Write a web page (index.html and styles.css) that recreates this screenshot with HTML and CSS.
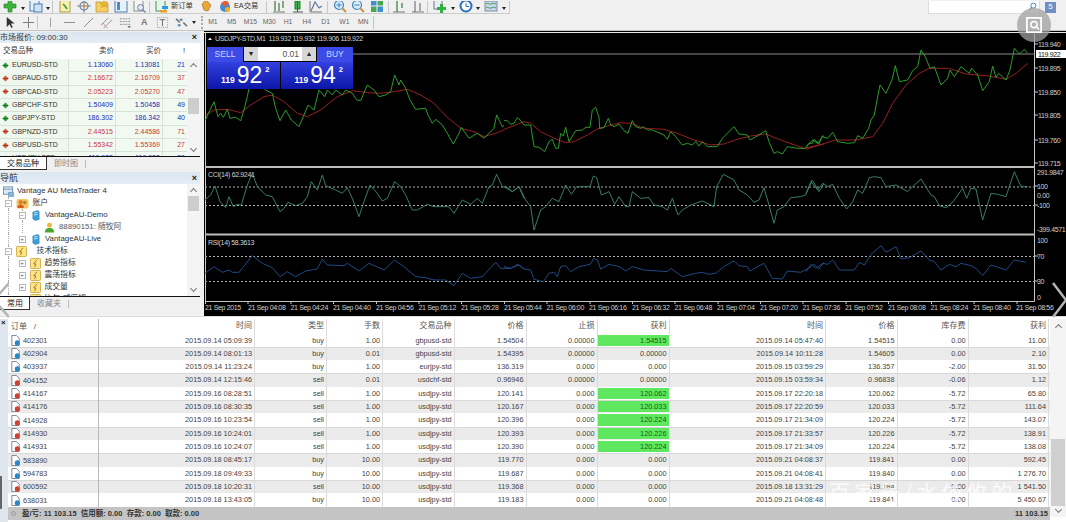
FILE: index.html
```html
<!DOCTYPE html>
<html lang="zh">
<head>
<meta charset="utf-8">
<title>MetaTrader 4</title>
<link rel="stylesheet" href="styles.css">
</head>
<body>
<svg class="defs" width="0" height="0" aria-hidden="true">
  <symbol id="doc-buy" viewBox="0 0 12 12"><path d="M2 .5h5l3 3v8H2z" fill="#fff" stroke="#50607a" stroke-width=".8"/><circle cx="8" cy="8.6" r="2.8" fill="#2a88c8"/></symbol>
  <symbol id="doc-sell" viewBox="0 0 12 12"><path d="M2 .5h5l3 3v8H2z" fill="#fff" stroke="#50607a" stroke-width=".8"/><circle cx="8" cy="8.6" r="2.8" fill="#d04030"/></symbol>
  <symbol id="arrow-g" viewBox="0 0 8 8"><path d="M4 .5 7.500 4 4 7.500.5 4z" fill="#2e9a3a"/><path d="M1 4h6" stroke="#1c6a28" stroke-width="1"/></symbol>
  <symbol id="arrow-r" viewBox="0 0 8 8"><path d="M4 .5 7.500 4 4 7.500.5 4z" fill="#d8583a"/><path d="M1 4h6" stroke="#a83420" stroke-width="1"/></symbol>
  <symbol id="flag" viewBox="0 0 12 12"><rect x=".5" y=".5" width="11" height="11" rx="1" fill="#fbe58a" stroke="#d0a840"/><path d="M7.500 2 4 6.500h2.500L5 10" fill="none" stroke="#b06a10"/></symbol>
  <symbol id="server" viewBox="0 0 10 14"><path d="M1 2.500 7 .5l2 1.500v10l-5 1.500-3-2z" fill="#3aa0dc" stroke="#1f6fa8" stroke-width=".6"/><path d="M2.500 4 7 3M2.500 6.500 7 5.500" stroke="#d8f0ff"/></symbol>
  <symbol id="user" viewBox="0 0 12 12"><circle cx="6" cy="3.500" r="2.700" fill="#e8b838"/><path d="M1 11.500c0-4 2-5 5-5s5 1 5 5z" fill="#48a830"/></symbol>
  <symbol id="users" viewBox="0 0 14 12"><rect x=".5" y="1" width="13" height="10.500" rx="2" fill="#f0c860"/><circle cx="5" cy="4.500" r="2.200" fill="#e07a28"/><path d="M1.500 11c0-3 1.500-4 3.500-4s3.500 1 3.500 4z" fill="#d85a20"/><circle cx="9.500" cy="5" r="2" fill="#b8862a"/></symbol>
  <symbol id="mt" viewBox="0 0 12 12"><rect x=".5" y="1" width="10" height="8" fill="#dceaf6" stroke="#6a90b8"/><path d="M1 3.500h9" stroke="#6a90b8"/><path d="M6 7h5.500v4.500H6z" fill="#8ab8dc" stroke="#4a80b0" stroke-width=".6"/></symbol>
</svg>

<div class="app">
  <div class="tb tb-one">
    <div class="tb-group">
      <span class="ic"><svg viewBox="0 0 14 14"><path d="M5 1h4v4h4v4H9v4H5V9H1V5h4z" fill="#3cb43c" stroke="#237a23" stroke-width=".6"/></svg></span><span class="dd"></span>
      <span class="ic"><svg viewBox="0 0 14 14"><rect x="1" y="1" width="9" height="11" fill="#e6f0fa" stroke="#4a7cb0"/><rect x="5" y="5" width="8" height="8" fill="#cfe2f5" stroke="#4a7cb0"/></svg></span><span class="dd"></span>
      <span class="sp"></span>
      <span class="ic"><svg viewBox="0 0 14 14"><rect x="2" y="1" width="10" height="12" fill="#f7efb0" stroke="#b09a40"/><path d="m5 5 2 2 2 3" stroke="#2d9a38" stroke-width="1.600" fill="none"/></svg></span>
      <span class="ic"><svg viewBox="0 0 14 14"><circle cx="7" cy="7" r="4" fill="none" stroke="#7a8aa0" stroke-width="1.400"/><path d="M7 0v14M0 7h14" stroke="#7a8aa0"/><circle cx="7" cy="7" r="1.500" fill="#d89030"/></svg></span>
      <span class="ic"><svg viewBox="0 0 14 14"><path d="M1 3h5l1 2h6v8H1z" fill="#f5d060" stroke="#b88f28" stroke-width=".7"/><path d="m9 .5 1.300 2.500 2.700.4-2 1.900.5 2.700L9 7 6.500 8.500 7 5.800 5 3.900l2.700-.4z" fill="#f0b820" stroke="#b88f28" stroke-width=".5"/></svg></span>
      <span class="ic"><svg viewBox="0 0 14 14"><rect x="1" y="1" width="12" height="12" fill="#e8f0f8" stroke="#4a7cb0"/><rect x="3" y="3" width="3" height="8" fill="#4a8cc8"/></svg></span>
      <span class="ic"><svg viewBox="0 0 14 14"><rect x="2" y="1" width="9" height="11" fill="#f6f6f6" stroke="#8a8a8a"/><circle cx="8.500" cy="8.500" r="3" fill="#dfeaf5" stroke="#6a7f98"/><path d="m11 11 2.500 2.500" stroke="#6a7f98" stroke-width="1.300"/></svg></span>
      <span class="sp"></span>
      <span class="ic"><svg viewBox="0 0 14 14"><rect x="1" y="1" width="9" height="11" fill="#e6f5ea" stroke="#3a9a4a"/><path d="M7 7h6v3H7z" fill="#2f9adf"/><path d="M5 11h7v2.500H5z" fill="#e8a030"/></svg></span>
      <span class="ic-label">新订单</span>
      <span class="ic wide"><svg viewBox="0 0 14 14"><path d="M3 5 7 1l5 5-3 6-4-1z" fill="#e8a838" stroke="#a87018" stroke-width=".7"/></svg></span>
      <span class="ic"><svg viewBox="0 0 14 14"><circle cx="7" cy="8" r="5" fill="#3f8fd0"/><path d="M3 4 8 1l3 3-4 4z" fill="#e85a30"/><circle cx="9.500" cy="10.500" r="2.500" fill="#f0b020"/></svg></span>
      <span class="ic-label ea">EA交易</span>
      <span class="sp after-ea"></span>
      <span class="ic"><svg viewBox="0 0 14 14"><path d="M3 2v10M7 4v8M11 2v7" stroke="#5a8a5a" stroke-width="1.400"/><path d="M1 13h12" stroke="#7a7a7a"/></svg></span>
      <span class="ic"><svg viewBox="0 0 14 14"><rect x="4" y="2" width="5" height="8" fill="#3fb04a" stroke="#1f7a2a"/><path d="M6.500 0v13M2 13h10" stroke="#555"/></svg></span>
      <span class="ic"><svg viewBox="0 0 14 14"><path d="M2 12 6 3l4 6 3-2" fill="none" stroke="#5a7a9a" stroke-width="1.200"/><path d="M1 1v12h12" fill="none" stroke="#777"/></svg></span>
      <span class="sp after-bars"></span>
      <span class="ic"><svg viewBox="0 0 14 14"><circle cx="6" cy="6" r="4.500" fill="#d8ecfa" stroke="#3f80b8" stroke-width="1.200"/><path d="m9.500 9.500 3.500 3.500" stroke="#c89030" stroke-width="1.800"/><path d="M3.500 6h5M6 3.500v5" stroke="#3f80b8"/></svg></span>
      <span class="ic"><svg viewBox="0 0 14 14"><circle cx="6" cy="6" r="4.500" fill="#d8ecfa" stroke="#3f80b8" stroke-width="1.200"/><path d="m9.500 9.500 3.500 3.500" stroke="#c89030" stroke-width="1.800"/><path d="M3.500 6h5" stroke="#3f80b8"/></svg></span>
      <span class="ic"><svg viewBox="0 0 14 14"><rect x="1" y="1" width="5.500" height="5.500" fill="#3f90d0"/><rect x="7.500" y="1" width="5.500" height="5.500" fill="#48a850"/><rect x="1" y="7.500" width="5.500" height="5.500" fill="#48a850"/><rect x="7.500" y="7.500" width="5.500" height="5.500" fill="#3f90d0"/></svg></span>
      <span class="sp after-grid"></span>
      <span class="ic"><svg viewBox="0 0 14 14"><path d="M5 1v12M10 4v5" stroke="#4a8a5a" stroke-width="1.400"/><path d="M1 13h12" stroke="#777"/></svg></span>
      <span class="ic"><svg viewBox="0 0 14 14"><path d="M4 1v12M9 4v8" stroke="#8a8a8a" stroke-width="1.400"/><path d="M1 13h12" stroke="#777"/></svg></span>
      <span class="sp"></span>
      <span class="ic"><svg viewBox="0 0 14 14"><rect x="1" y="1" width="8" height="9" fill="#e8eef4" stroke="#6a7a8a"/><path d="M7 5h3v3h3v3h-3v3H7v-3H4V8h3z" fill="#2fb040"/></svg></span><span class="dd"></span>
      <span class="ic"><svg viewBox="0 0 14 14"><circle cx="7" cy="7" r="5.500" fill="#fff" stroke="#2a70b8" stroke-width="2"/><path d="M7 4v3.500h3" stroke="#2a70b8" fill="none"/></svg></span><span class="dd"></span>
      <span class="ic"><svg viewBox="0 0 14 14"><rect x="1" y="2" width="12" height="10" fill="#c8d8e8" stroke="#7a8ca0"/><path d="M2 5c2-2 3 1 5 0s3-1 5 0M2 9c2-2 3 1 5 0s3-1 5 0" stroke="#3a9a4a" fill="none"/></svg></span><span class="dd"></span>
    </div>
    <div class="search"><svg viewBox="0 0 10 10"><circle cx="6" cy="4" r="2.800" fill="none" stroke="#3a78b8"/><path d="M4 6 1.500 9" stroke="#3a78b8" stroke-width="1.300"/></svg></div>
    <div class="book">5</div>
  </div>

  <div class="tb tb-two">
    <span class="tool on"><svg viewBox="0 0 14 14"><path d="M4 1v11l3-3 2 4 1.500-.8-2-4h4z" fill="#333"/></svg></span>
    <span class="tool"><svg viewBox="0 0 14 14"><path d="M7 1v12M1 7h12" stroke="#777"/></svg></span>
    <span class="sp"></span>
    <span class="tool"><svg viewBox="0 0 14 14"><path d="M7 2v10" stroke="#999"/></svg></span>
    <span class="tool"><svg viewBox="0 0 14 14"><path d="M1 7h12" stroke="#888"/></svg></span>
    <span class="tool"><svg viewBox="0 0 14 14"><path d="m2 12 10-10" stroke="#888"/></svg></span>
    <span class="tool"><svg viewBox="0 0 14 14"><path d="m1 10 8-8M4 13l9-9" stroke="#8a8a8a"/><path d="m3 8 5 5" stroke="#c88" stroke-width="1.500" stroke-dasharray="1 1"/></svg></span>
    <span class="tool"><svg viewBox="0 0 14 14"><path d="M1 3h12M1 6h12M1 9h12" stroke="#888" stroke-dasharray="2 1"/><path d="M9 11h4l-2 2z" fill="#555"/></svg></span>
    <span class="tool letter">A</span>
    <span class="tool"><svg viewBox="0 0 14 14"><rect x="1.500" y="1.500" width="11" height="11" fill="none" stroke="#999" stroke-dasharray="1 1"/><path d="M4 4h6M7 4v7" stroke="#666"/></svg></span>
    <span class="tool"><svg viewBox="0 0 14 14"><path d="m1 3 4 4M9 7l4 4" stroke="#666" stroke-width="1.500"/><path d="M5 3h3v2H5zM3 9h3v2H3z" fill="#5a7f9f"/></svg></span><span class="dd"></span>
    <span class="grip"></span>
    <span class="tf">M1</span><span class="tf">M5</span><span class="tf">M15</span><span class="tf">M30</span><span class="tf">H1</span><span class="tf">H4</span><span class="tf">D1</span><span class="tf">W1</span><span class="tf">MN</span>
    <span class="sp"></span>
  </div>

  <div class="main">
    <aside class="left">
      <section class="market">
        <div class="ph">市场报价: 09:00:30<b>×</b></div>
        <div class="mhead"><span>交易品种</span><span>卖价</span><span>买价</span><span>!</span></div>
        <div class="mbody">
          <div class="mlist">
            <div class="mrow up"><span><svg><use href="#arrow-g"/></svg>EURUSD-STD</span><span>1.13060</span><span>1.13081</span><span>21</span></div>
            <div class="mrow dn"><span><svg><use href="#arrow-r"/></svg>GBPAUD-STD</span><span>2.16672</span><span>2.16709</span><span>37</span></div>
            <div class="mrow dn"><span><svg><use href="#arrow-r"/></svg>GBPCAD-STD</span><span>2.05223</span><span>2.05270</span><span>47</span></div>
            <div class="mrow up"><span><svg><use href="#arrow-g"/></svg>GBPCHF-STD</span><span>1.50409</span><span>1.50458</span><span>49</span></div>
            <div class="mrow up"><span><svg><use href="#arrow-g"/></svg>GBPJPY-STD</span><span>186.302</span><span>186.342</span><span>40</span></div>
            <div class="mrow dn"><span><svg><use href="#arrow-r"/></svg>GBPNZD-STD</span><span>2.44515</span><span>2.44586</span><span>71</span></div>
            <div class="mrow dn"><span><svg><use href="#arrow-r"/></svg>GBPUSD-STD</span><span>1.55342</span><span>1.55369</span><span>27</span></div>
            <div class="mrow up"><span><svg><use href="#arrow-g"/></svg>USDJPY-STD</span><span>119.922</span><span>119.952</span><span>30</span></div>
          </div>
          <div class="sb mkt-sb"><i class="up-a"></i><i class="thumb"></i><i class="dn-a"></i></div>
        </div>
        <div class="tabs"><span class="tab on">交易品种</span><span class="tab">即时图</span><span class="tab-sep"></span></div>
      </section>

      <section class="nav">
        <div class="ph nav-ph">导航<b>×</b></div>
        <div class="nbody">
          <div class="tree">
            <div class="n l0"><svg class="i"><use href="#mt"/></svg>Vantage AU MetaTrader 4</div>
            <div class="n l1"><span class="tg">−</span><svg class="i iw"><use href="#users"/></svg>账户</div>
            <div class="n l2 sub"><span class="tg">−</span><svg class="i is"><use href="#server"/></svg>VantageAU-Demo</div>
            <div class="n l3 sub"><svg class="i"><use href="#user"/></svg>88890151: 随牧阿</div>
            <div class="n l2"><span class="tg">+</span><svg class="i is"><use href="#server"/></svg>VantageAU-Live</div>
            <div class="n l1"><span class="tg">−</span><svg class="i if"><use href="#flag"/></svg>技术指标</div>
            <div class="n l2"><span class="tg">+</span><svg class="i"><use href="#flag"/></svg>趋势指标</div>
            <div class="n l2"><span class="tg">+</span><svg class="i"><use href="#flag"/></svg>震荡指标</div>
            <div class="n l2"><span class="tg">+</span><svg class="i"><use href="#flag"/></svg>成交量</div>
            <div class="n l2"><span class="tg">+</span><svg class="i"><use href="#flag"/></svg>比尔·威廉姆</div>
          </div>
          <div class="sb nav-sb"><i class="up-a"></i><i class="thumb"></i><i class="dn-a"></i></div>
        </div>
        <div class="tabs"><span class="tab on short">常用</span><span class="tab">收藏夹</span><span class="tab-sep"></span></div>
      </section>
    </aside>

    <div class="chart">
      <svg class="plot" viewBox="204 31 862 285" width="862" height="285">
        <rect x="204" y="31" width="862" height="285" fill="#000"/>
        <path class="frame" d="M204 32.500H1066"/>
        <path class="frame-dim" d="M205.500 33V301.500H1034.500V33"/>
        <path class="pane" d="M205 167H1035M205 234.500H1035"/>
        <path class="bid" d="M353 54H1035"/>
        <path class="lvl" d="M205 187H1035M205 205.500H1035M205 256.500H1035M205 281.500H1035"/>
        <path class="frame-dim" d="M205.500 301v3M248 301v3M291 301v3M333.500 301v3M376.500 301v3M419 301v3M461.500 301v3M504.500 301v3M547 301v3M590 301v3M632.500 301v3M675 301v3M718 301v3M760.500 301v3M803 301v3M846 301v3M888.500 301v3M931.500 301v3M974 301v3M1017 301v3M1035 44h3M1035 68h3M1035 92h3M1035 115h3M1035 140h3M1035 163h3M1035 186h3M1035 205h3M1035 256h3M1035 281h3"/>

        <polyline class="red" transform="translate(204 30) scale(.3333)" points="5,255 30,240 70,238 110,248 140,225 180,200 205,195 240,215 280,250 310,260 350,240 400,200 445,182 490,188 530,190 570,185 610,178 650,195 690,220 730,262 770,295 810,305 840,320 880,308 900,300"/>
        <polyline class="red" transform="translate(504 30) scale(.3333)" points="0,298 30,287 60,275 80,280 110,305 150,325 185,338 210,335 250,315 280,297 320,285 350,278 380,280 420,295 480,298 520,310 570,330 620,345 660,342 700,328 740,318 785,312 830,330 900,355 960,342"/>
        <polyline class="red" transform="translate(806 0) scale(.3333)" points="0,448 40,435 90,420 150,420 200,410 230,370 260,310 300,255 340,220 370,205 430,205 480,222 550,228 600,238 630,220 665,190"/>
        <polyline class="green" transform="translate(204 30) scale(.3333)" points="5,268 18,240 30,215 42,260 50,250 58,262 70,238 78,265 95,262 110,272 120,240 130,200 140,150 160,130 184,180 205,190 215,235 228,272 245,240 262,270 285,290 300,255 312,225 330,240 345,180 362,200 370,180 385,195 395,180 415,195 425,180 445,190 458,210 470,212 490,165 510,180 525,200 545,195 560,185 572,135 585,165 590,150 605,175 618,210 635,238 665,235 672,255 685,280 695,268 715,285 730,310 748,342 765,310 772,292 795,325 820,310 840,325 870,295 878,255 895,290 900,285"/>
        <polyline class="green" transform="translate(504 30) scale(.3333)" points="0,272 10,272 20,283 30,280 40,263 50,272 60,285 80,285 90,350 105,352 122,365 135,335 145,328 155,355 163,355 170,310 178,318 185,292 195,335 215,302 235,300 245,292 258,292 265,240 275,232 285,262 287,295 300,293 313,265 320,285 330,290 345,282 360,302 372,310 385,272 395,290 410,295 420,290 430,300 445,300 480,315 490,328 500,305 515,320 535,345 550,340 565,345 575,335 585,348 595,335 610,350 625,350 640,350 655,325 690,290 705,312 730,315 738,330 760,318 785,302 795,335 810,370 820,365 835,372 850,350 880,355 905,355 915,340 925,340 930,328 945,342 955,318 960,318"/>
        <polyline class="green" transform="translate(806 0) scale(.3333)" points="0,440 20,420 35,430 50,410 65,415 80,397 95,425 125,430 145,428 155,407 170,415 188,385 195,360 205,345 215,290 222,255 240,280 258,240 268,197 280,245 305,240 320,212 335,200 345,150 358,170 372,205 385,200 405,255 425,235 432,210 445,230 465,200 490,220 497,205 515,225 530,272 550,245 560,198 570,232 578,220 600,240 612,210 625,145 640,162 655,148 665,160"/>

        <polyline class="cci" transform="translate(204 165) scale(.3333)" points="3,105 20,90 33,63 48,110 65,128 75,95 88,125 100,118 112,120 130,60 145,25 160,65 185,90 205,95 228,140 240,130 252,112 275,122 295,115 310,95 322,50 340,75 355,30 365,62 395,75 415,85 430,68 445,100 465,155 480,110 498,60 520,85 535,108 550,100 572,50 590,65 605,90 625,135 640,135 670,118 690,125 735,125 750,145 775,105 800,118 820,100 835,115 855,65 865,60 878,28 895,65 910,68 925,80 945,65 960,100"/>
        <polyline class="cci" transform="translate(504 165) scale(.3333)" points="0,65 25,80 45,65 65,105 80,125 90,195 110,135 125,125 145,100 165,110 185,60 202,88 218,65 258,65 268,33 278,38 292,90 315,80 332,118 345,95 365,125 375,125 385,80 410,100 435,98 450,120 475,125 490,135 505,100 522,150 535,135 560,120 595,108 630,125 638,65 658,28 690,45 705,75 730,90 750,112 765,105 780,68 795,120 810,175 820,135 840,125 860,98 890,95 905,90 925,45 945,80 960,55"/>
        <polyline class="cci" transform="translate(806 165) scale(.3333)" points="0,85 15,50 35,75 50,55 65,65 80,58 100,100 122,132 140,110 155,75 170,85 190,38 205,35 225,38 240,65 270,60 305,80 320,65 345,42 375,90 385,95 400,122 420,128 440,112 470,70 482,100 495,70 510,72 530,165 555,85 575,88 600,95 625,20 645,65 665,65"/>

        <polyline class="rsi" transform="translate(204 165) scale(.3333)" points="3,325 30,305 55,322 75,315 85,322 105,322 145,272 175,295 205,308 228,335 250,320 275,335 305,318 340,312 355,282 370,300 420,302 430,295 465,318 495,295 540,315 572,285 600,305 635,335 665,338 690,345 725,345 750,362 775,325 800,340 835,335 875,292 890,310 920,310 945,300 960,312"/>
        <polyline class="rsi" transform="translate(504 165) scale(.3333)" points="0,305 20,310 42,298 60,312 80,315 90,343 118,350 135,325 150,322 160,335 170,305 185,302 200,320 225,305 258,298 270,280 280,285 290,312 315,298 345,305 365,318 385,305 420,315 490,320 500,310 535,335 575,325 595,322 615,328 635,325 660,305 690,287 705,302 730,305 738,318 780,295 805,340 835,342 850,318 890,322 910,312 930,298 945,312 960,292"/>
        <polyline class="rsi" transform="translate(806 165) scale(.3333)" points="0,320 15,298 30,310 50,295 65,298 80,285 100,315 145,315 160,292 175,300 195,268 225,242 240,262 270,245 285,282 310,278 345,258 370,285 385,290 405,315 430,298 450,305 465,295 495,302 510,310 530,332 555,300 600,315 625,285 660,292"/>

        <path d="m208 40 2-2.500 2 2.500z" fill="#eee"/>
        <text class="t" x="215" y="40.500">USDJPY-STD,M1 &#160;119.932 119.932 119.906 119.922</text>
        <text class="t" x="208" y="177">CCI(14) 62.9241</text>
        <text class="t" x="208" y="244.500">RSI(14) 58.3613</text>

        <text class="t" x="1038" y="47">119.940</text>
        <rect x="1036" y="50" width="30" height="8" fill="#fff"/>
        <text class="t dark" x="1038" y="57">119.922</text>
        <text class="t" x="1038" y="70.500">119.895</text>
        <text class="t" x="1038" y="95">119.850</text>
        <text class="t" x="1038" y="118">119.805</text>
        <text class="t" x="1038" y="142.500">119.760</text>
        <text class="t" x="1038" y="166">119.715</text>
        <text class="t" x="1037" y="175">291.9847</text>
        <text class="t" x="1037" y="189">100</text>
        <text class="t" x="1037" y="198">0.00</text>
        <text class="t" x="1037" y="208">-100</text>
        <text class="t" x="1037" y="232">-399.4571</text>
        <text class="t" x="1037" y="243">100</text>
        <text class="t" x="1037" y="259">70</text>
        <text class="t" x="1037" y="284">30</text>
        <text class="t" x="1037" y="300">0</text>

        <text class="t" x="205" y="310">21 Sep 2015</text>
        <text class="t" x="248" y="310">21 Sep 04:08</text>
        <text class="t" x="290.500" y="310">21 Sep 04:24</text>
        <text class="t" x="333" y="310">21 Sep 04:40</text>
        <text class="t" x="376" y="310">21 Sep 04:56</text>
        <text class="t" x="418.500" y="310">21 Sep 05:12</text>
        <text class="t" x="461" y="310">21 Sep 05:28</text>
        <text class="t" x="504" y="310">21 Sep 05:44</text>
        <text class="t" x="546.500" y="310">21 Sep 06:00</text>
        <text class="t" x="589" y="310">21 Sep 06:16</text>
        <text class="t" x="632" y="310">21 Sep 06:32</text>
        <text class="t" x="674.500" y="310">21 Sep 06:48</text>
        <text class="t" x="717" y="310">21 Sep 07:04</text>
        <text class="t" x="760" y="310">21 Sep 07:20</text>
        <text class="t" x="802.500" y="310">21 Sep 07:36</text>
        <text class="t" x="845" y="310">21 Sep 07:52</text>
        <text class="t" x="888" y="310">21 Sep 08:08</text>
        <text class="t" x="930.500" y="310">21 Sep 08:24</text>
        <text class="t" x="973" y="310">21 Sep 08:40</text>
        <text class="t" x="1016" y="310">21 Sep 08:56</text>
      </svg>

      <div class="trade">
        <div class="trade-top">
          <span class="tbtn sell">SELL</span>
          <span class="spin"><i class="spin-btn">▾</i><span class="lot">0.01</span><i class="spin-btn">▴</i></span>
          <span class="tbtn buy">BUY</span>
        </div>
        <div class="trade-prices">
          <div class="price"><small>119</small><strong>92</strong><sup>2</sup></div>
          <div class="price"><small>119</small><strong>94</strong><sup>2</sup></div>
        </div>
      </div>
    </div>
  </div>

  <div class="terminal">
    <div class="side"><b>×</b><i></i></div>
    <div class="ttable">
      <div class="trow thead"><span class="c-first">订单 &nbsp; /</span><span>时间</span><span>类型</span><span>手数</span><span>交易品种</span><span>价格</span><span>止损</span><span>获利</span><span>时间</span><span>价格</span><span>库存费</span><span>获利</span></div>
      <div class="trow"><span class="c-first"><svg><use href="#doc-buy"/></svg>402301</span><span>2015.09.14 05:09:39</span><span>buy</span><span>1.00</span><span>gbpusd-std</span><span>1.54504</span><span>0.00000</span><span class="hit">1.54515</span><span>2015.09.14 05:47:40</span><span>1.54515</span><span>0.00</span><span>11.00</span></div>
      <div class="trow"><span class="c-first"><svg><use href="#doc-buy"/></svg>402904</span><span>2015.09.14 08:01:13</span><span>buy</span><span>0.01</span><span>gbpusd-std</span><span>1.54395</span><span>0.00000</span><span>0.00000</span><span>2015.09.14 10:11:28</span><span>1.54605</span><span>0.00</span><span>2.10</span></div>
      <div class="trow"><span class="c-first"><svg><use href="#doc-buy"/></svg>403937</span><span>2015.09.14 11:23:24</span><span>buy</span><span>1.00</span><span>eurjpy-std</span><span>136.319</span><span>0.000</span><span>0.000</span><span>2015.09.15 03:59:29</span><span>136.357</span><span>-2.00</span><span>31.50</span></div>
      <div class="trow"><span class="c-first"><svg><use href="#doc-sell"/></svg>404152</span><span>2015.09.14 12:15:46</span><span>sell</span><span>0.01</span><span>usdchf-std</span><span>0.96946</span><span>0.00000</span><span>0.00000</span><span>2015.09.15 03:59:34</span><span>0.96838</span><span>-0.06</span><span>1.12</span></div>
      <div class="trow"><span class="c-first"><svg><use href="#doc-sell"/></svg>414167</span><span>2015.09.16 08:28:51</span><span>sell</span><span>1.00</span><span>usdjpy-std</span><span>120.141</span><span>0.000</span><span class="hit">120.062</span><span>2015.09.17 22:20:18</span><span>120.062</span><span>-5.72</span><span>65.80</span></div>
      <div class="trow"><span class="c-first"><svg><use href="#doc-sell"/></svg>414176</span><span>2015.09.16 08:30:35</span><span>sell</span><span>1.00</span><span>usdjpy-std</span><span>120.167</span><span>0.000</span><span class="hit">120.033</span><span>2015.09.17 22:20:59</span><span>120.033</span><span>-5.72</span><span>111.64</span></div>
      <div class="trow"><span class="c-first"><svg><use href="#doc-sell"/></svg>414928</span><span>2015.09.16 10:23:54</span><span>sell</span><span>1.00</span><span>usdjpy-std</span><span>120.396</span><span>0.000</span><span class="hit">120.224</span><span>2015.09.17 21:34:09</span><span>120.224</span><span>-5.72</span><span>143.07</span></div>
      <div class="trow"><span class="c-first"><svg><use href="#doc-sell"/></svg>414930</span><span>2015.09.16 10:24:01</span><span>sell</span><span>1.00</span><span>usdjpy-std</span><span>120.393</span><span>0.000</span><span class="hit">120.226</span><span>2015.09.17 21:33:57</span><span>120.226</span><span>-5.72</span><span>138.91</span></div>
      <div class="trow"><span class="c-first"><svg><use href="#doc-sell"/></svg>414931</span><span>2015.09.16 10:24:07</span><span>sell</span><span>1.00</span><span>usdjpy-std</span><span>120.390</span><span>0.000</span><span class="hit">120.224</span><span>2015.09.17 21:34:09</span><span>120.224</span><span>-5.72</span><span>138.08</span></div>
      <div class="trow"><span class="c-first"><svg><use href="#doc-buy"/></svg>583890</span><span>2015.09.18 08:45:17</span><span>buy</span><span>10.00</span><span>usdjpy-std</span><span>119.770</span><span>0.000</span><span>0.000</span><span>2015.09.21 04:08:37</span><span>119.841</span><span>0.00</span><span>592.45</span></div>
      <div class="trow"><span class="c-first"><svg><use href="#doc-buy"/></svg>594783</span><span>2015.09.18 09:49:33</span><span>buy</span><span>10.00</span><span>usdjpy-std</span><span>119.687</span><span>0.000</span><span>0.000</span><span>2015.09.21 04:08:41</span><span>119.840</span><span>0.00</span><span>1 276.70</span></div>
      <div class="trow"><span class="c-first"><svg><use href="#doc-sell"/></svg>600592</span><span>2015.09.18 10:20:31</span><span>sell</span><span>10.00</span><span>usdjpy-std</span><span>119.368</span><span>0.000</span><span>0.000</span><span>2015.09.18 13:31:29</span><span>119.184</span><span>0.00</span><span>1 541.50</span></div>
      <div class="trow"><span class="c-first"><svg><use href="#doc-buy"/></svg>638031</span><span>2015.09.18 13:43:05</span><span>buy</span><span>10.00</span><span>usdjpy-std</span><span>119.183</span><span>0.000</span><span>0.000</span><span>2015.09.21 04:08:48</span><span>119.841</span><span>0.00</span><span>5 450.67</span></div>
      <div class="tfoot"><span class="bal"><i></i>盈/亏: 11 103.15&nbsp; 信用额: 0.00&nbsp; 存款: 0.00&nbsp; 取款: 0.00</span><span>11 103.15</span></div>
    </div>
    <div class="sb term-sb"><i class="up-a"></i><i class="thumb"></i><i class="dn-a"></i></div>
  </div>

  <div class="lens"><svg viewBox="0 0 18 18"><rect x="1" y="1" width="16" height="16" fill="none" stroke="#fff" stroke-width="2"/><circle cx="9" cy="8.500" r="3.500" fill="none" stroke="#fff" stroke-width="1.800"/><path d="m11.500 11 3 3" stroke="#fff" stroke-width="1.800"/></svg></div>
  <svg class="chev chev-l" viewBox="0 0 9 36"><path d="M9 1-6 18 9 35" fill="none" stroke="#b4b4b4" stroke-width="2.500"/></svg>
  <svg class="chev chev-r" viewBox="0 0 14 36"><path d="m1 1 13 17L1 35" fill="none" stroke="#b4b4b4" stroke-width="2.500"/></svg>
  <div class="mark">百家号/水依攸的</div>
</div>
</body>
</html>
```

FILE: styles.css
```css
* { box-sizing: border-box; }
html, body { margin: 0; padding: 0; }
body { width: 1066px; height: 522px; overflow: hidden; background: #f0f0f0; color: #333; font: 7.300px/1 "Liberation Sans", "Noto Sans CJK SC", sans-serif; }
.defs { position: absolute; }
.app { position: relative; width: 1066px; height: 522px; overflow: hidden; display: flex; flex-direction: column; }

/* toolbars */
.tb { display: flex; align-items: center; background: #f0f0f0; }
.tb-one { height: 14px; }
.tb-group { display: flex; align-items: flex-end; flex: none; width: 510px; height: 13px; padding-left: 1px; border-right: 1px solid #ccc; border-bottom: 1px solid #ccc; overflow: hidden; }
.ic { flex: none; width: 18.500px; height: 12px; display: flex; justify-content: center; align-items: flex-end; }
.ic svg { flex: none; width: 14px; height: 14px; }
.ic.wide { margin-left: 4px; }
.ic-label { flex: none; width: 22px; height: 12px; font-size: 7.300px; line-height: 10px; color: #333; white-space: nowrap; }
.ic-label.ea { width: 24px; }
.dd { flex: none; width: 7px; height: 9px; position: relative; }
.dd::after { content: ""; position: absolute; left: 1px; top: 3px; border: 2px solid transparent; border-top: 3px solid #222; }
.sp { flex: none; width: 4px; height: 13px; border-left: 1px solid #c6c6c6; }
.sp.after-ea { margin-left: 8px; }
.sp.after-bars { margin-left: 1px; }
.sp.after-grid { margin-left: 2px; margin-right: -2px; }
.search { flex: none; width: 112px; height: 13px; margin-left: 418px; background: #fff; border: 1px solid #ddd; border-top: 0; display: flex; justify-content: flex-end; align-items: center; padding-right: 2px; }
.search svg { width: 9px; height: 9px; }
.book { flex: none; width: 11px; height: 11px; margin-left: 5px; background: #6f8fc4; color: #fff; font-size: 8px; text-align: center; line-height: 10px; }

.tb-two { height: 17px; border-bottom: 1px solid #c4c4c4; }
.tool { flex: none; width: 18.700px; height: 16px; display: flex; align-items: center; justify-content: center; }
.tool svg { width: 13px; height: 13px; }
.tool.letter { font-size: 9px; color: #777; font-weight: bold; }
.grip { flex: none; width: 2px; height: 13px; margin: 0 .6px 0 3px; border-left: 2px dotted #aaa; }
.tf { flex: none; width: 18.800px; text-align: center; font-size: 6.800px; line-height: 16px; color: #666; }

/* main */
.main { display: flex; height: 285px; gap: 4px; flex: none; }
.left { width: 200px; flex: none; display: flex; flex-direction: column; gap: 2px; padding-top: 1px; }

.ph { height: 11px; background: linear-gradient(#dbe6f1, #e6edf4); font-size: 8px; line-height: 11px; color: #333; position: relative; }
.ph b { position: absolute; right: 3px; top: 0; color: #222; font-size: 9px; }
.nav-ph { height: 12px; font-size: 9px; line-height: 12px; }

.market { height: 138px; display: flex; flex-direction: column; flex: none; }
.mhead { height: 16px; background: #fff; display: grid; grid-template-columns: 69px 47px 47px 24px 13px; align-items: center; font-size: 7.500px; color: #333; }
.mhead span { text-align: right; padding-right: 2px; }
.mhead span:first-child { text-align: left; padding-left: 3px; }
.mbody { height: 97px; display: flex; overflow: hidden; }
.mlist { width: 187px; flex: none; }
.mrow { height: 13.330px; display: grid; grid-template-columns: 69px 47px 47px 24px; align-items: center; background: #f1f9f1; border-bottom: 1px solid #d6e2d6; font-size: 7px; }
.mrow span { text-align: right; padding-right: 2px; height: 100%; line-height: 12.500px; border-right: 1px solid #d4e4d4; }
.mrow span:last-child { border-right: 0; }
.mrow span:first-child { text-align: left; display: flex; align-items: center; background: #eef8ee; color: #333; padding-left: 2px; }
.mrow span:first-child svg { width: 7px; height: 7px; margin-right: 3px; flex: none; }
.mrow.up span:not(:first-child) { color: #2030b0; }
.mrow.dn span:not(:first-child) { color: #cc3a3a; }

.sb { flex: none; width: 13px; background: #f4f4f4; display: flex; flex-direction: column; align-items: center; position: relative; }
.sb i { display: block; flex: none; }
.sb .up-a, .sb .dn-a { width: 5px; height: 5px; border-left: 1px solid #777; border-top: 1px solid #777; transform: rotate(45deg); margin-top: 5px; }
.sb .dn-a { transform: rotate(225deg); margin-top: auto; margin-bottom: 5px; }
.sb .thumb { width: 11px; background: #cdcdcd; }
.mkt-sb .thumb { height: 16px; margin-top: 29px; }
.nav-sb .thumb { height: 15px; margin-top: 2px; }

.tabs { height: 14px; flex: none; border-top: 1px solid #111; display: flex; align-items: center; font-size: 8px; color: #888; background: #f0f0f0; }
.tab { padding: 0 7px; height: 100%; line-height: 13px; }
.tab.on { background: #fff; color: #222; border-right: 1px solid #333; border-bottom: 1px solid #333; }
.tab.short { padding: 0 6px 0 7px; }
.tab-sep { width: 1px; height: 8px; background: #bbb; }

.nav { height: 138px; display: flex; flex-direction: column; flex: none; }
.nbody { height: 113px; display: flex; overflow: hidden; background: #fff; }
.tree { width: 187px; flex: none; overflow: hidden; padding-top: 1px; }
.n { height: 12px; display: flex; align-items: center; font-size: 7.800px; color: #333; position: relative; white-space: nowrap; }
.l1::before, .l2::before, .l3::before { content: ""; position: absolute; left: 8px; top: 0; bottom: 0; border-left: 1px dotted #aaa; z-index: 0; }
.sub::after { content: ""; position: absolute; left: 22px; top: 0; bottom: 0; border-left: 1px dotted #aaa; }
.n .tg { position: relative; z-index: 1; }
.n .i { flex: none; width: 11px; height: 11px; margin-right: 4px; }
.n .iw { width: 13px; margin-right: 4px; }
.n .is { width: 8px; height: 11px; margin: 0 5.500px 0 2px; }
.n .if { margin-right: 10px; }
.l0 { padding-left: 3px; }
.l0 .i { margin-right: 3px; }
.l1 { padding-left: 4.500px; }
.l2 { padding-left: 18.500px; }
.l3 { padding-left: 44px; color: #555; }
.tg { flex: none; width: 7px; height: 7px; margin-right: 4px; border: 1px solid #b8b8b8; background: #fff; color: #555; font-size: 6px; line-height: 5px; text-align: center; }
.l2 .tg { margin-right: 4px; }

/* chart */
.chart { flex: 1; position: relative; background: #000; }
.plot { display: block; }
.frame { stroke: #e8e8e8; fill: none; }
.frame-dim { stroke: #c8c8c8; fill: none; }
.pane { stroke: #bdbdbd; stroke-width: 2; fill: none; }
.bid { stroke: #8a8a8a; fill: none; }
.lvl { stroke: #b0b0b0; stroke-dasharray: 2 2; fill: none; }
polyline { fill: none; vector-effect: non-scaling-stroke; stroke-width: .9; }
.green { stroke: #30ad30; }
.red { stroke: #a82226; }
.cci { stroke: #3f8878; }
.rsi { stroke: #24508f; }
.t { fill: #d0d0d0; font: 7px "Liberation Sans", sans-serif; letter-spacing: -.35px; }
.t.dark { fill: #111; }

.trade { position: absolute; left: 3px; top: 16px; width: 146px; color: #fff; }
.trade-top { display: flex; height: 15px; }
.tbtn { width: 36px; background: #3d4be6; color: #cfd8ff; font-size: 8.500px; line-height: 15px; text-align: center; }
.spin { width: 74px; flex: none; display: flex; background: #fff; height: 15px; border: 1px solid #000; border-top: 0; }
.spin-btn { width: 14px; background: #d6d6d6; color: #222; font: 8px/14px "DejaVu Sans", sans-serif; text-align: center; }
.lot { flex: 1; text-align: right; padding-right: 3px; color: #555; font-size: 8.500px; line-height: 14px; }
.trade-prices { display: flex; justify-content: space-between; }
.price { width: 72.500px; height: 27px; background: linear-gradient(#3240e0, #0c16a8); display: flex; align-items: flex-end; justify-content: center; padding: 0 0 3px 4px; }
.price small { font-size: 8.500px; font-weight: bold; line-height: 9px; margin: 0 2px 1px 0; }
.price strong { font-weight: normal; font-size: 23px; line-height: 22px; }
.price sup { font-size: 7.500px; font-weight: bold; line-height: 1; margin: 0 0 13px 3px; }

/* terminal */
.terminal { flex: 1; display: flex; padding-top: 2px; background: #fff; border-top: 1px solid #ddd; }
.side { width: 8px; flex: none; background: #dfe6ee; position: relative; }
.side b { font-size: 8px; color: #222; display: block; padding-left: 1px; }
.side i { position: absolute; left: 0; top: 157px; width: 2px; height: 33px; background: #666; }
.ttable { width: 1042px; flex: none; }
.trow { display: grid; grid-template-columns: 91px 156px 72px 56px 71.500px 72px 71px 72px 156.500px 71.500px 71px 80.500px; height: 13.330px; background: #fff; color: #444; }
.trow:nth-child(odd) { background: #ebebeb; box-shadow: inset 0 1px 0 #d8d8d8; }
.trow.thead { height: 14.500px; background: #fff; box-shadow: none; color: #555; font-size: 8px; }
.trow span { text-align: right; padding-right: 2px; line-height: 13px; border-right: 1px solid #dcdcdc; white-space: nowrap; }
.trow .c-first { text-align: left; padding-left: 2px; display: flex; align-items: center; border-right-color: #b8b8b8; }
.c-first svg { width: 11px; height: 11px; margin-right: 2px; flex: none; }
.thead .c-first { padding-left: 3px; }
.trow .hit { background: #5fe85f; color: #156015; margin: 1px 1px 1px 0; line-height: 11px; border-right: 0; }
.tfoot { height: 13px; background: #c4c4c4; display: flex; justify-content: space-between; align-items: center; padding: 0 2px 0 3px; font-weight: bold; font-size: 7.500px; color: #333; }
.bal { display: flex; align-items: center; }
.bal i { width: 5px; height: 5px; border: 1px solid #999; border-radius: 50%; margin-right: 6px; }
.term-sb { width: 16px; height: 198px; background: #f4f4f4; }
.term-sb .thumb { width: 14px; height: 67px; margin-top: 109px; background: #cfcfcf; }
.term-sb .up-a { margin-top: 6px; }

/* overlays */
.lens { position: absolute; left: 1017px; top: 8px; width: 34px; height: 34px; border-radius: 50%; background: rgba(160,160,160,.75); display: flex; align-items: center; justify-content: center; }
.lens svg { width: 16px; height: 16px; }
.chev { position: absolute; top: 282px; height: 36px; }
.chev-l { left: 0; width: 9px; }
.chev-r { left: 1052px; width: 14px; }
.mark { position: absolute; left: 829px; top: 481px; font: 21px/1 "Noto Sans CJK SC", sans-serif; color: rgba(255,255,255,.8); white-space: nowrap; letter-spacing: 4px; }
```
